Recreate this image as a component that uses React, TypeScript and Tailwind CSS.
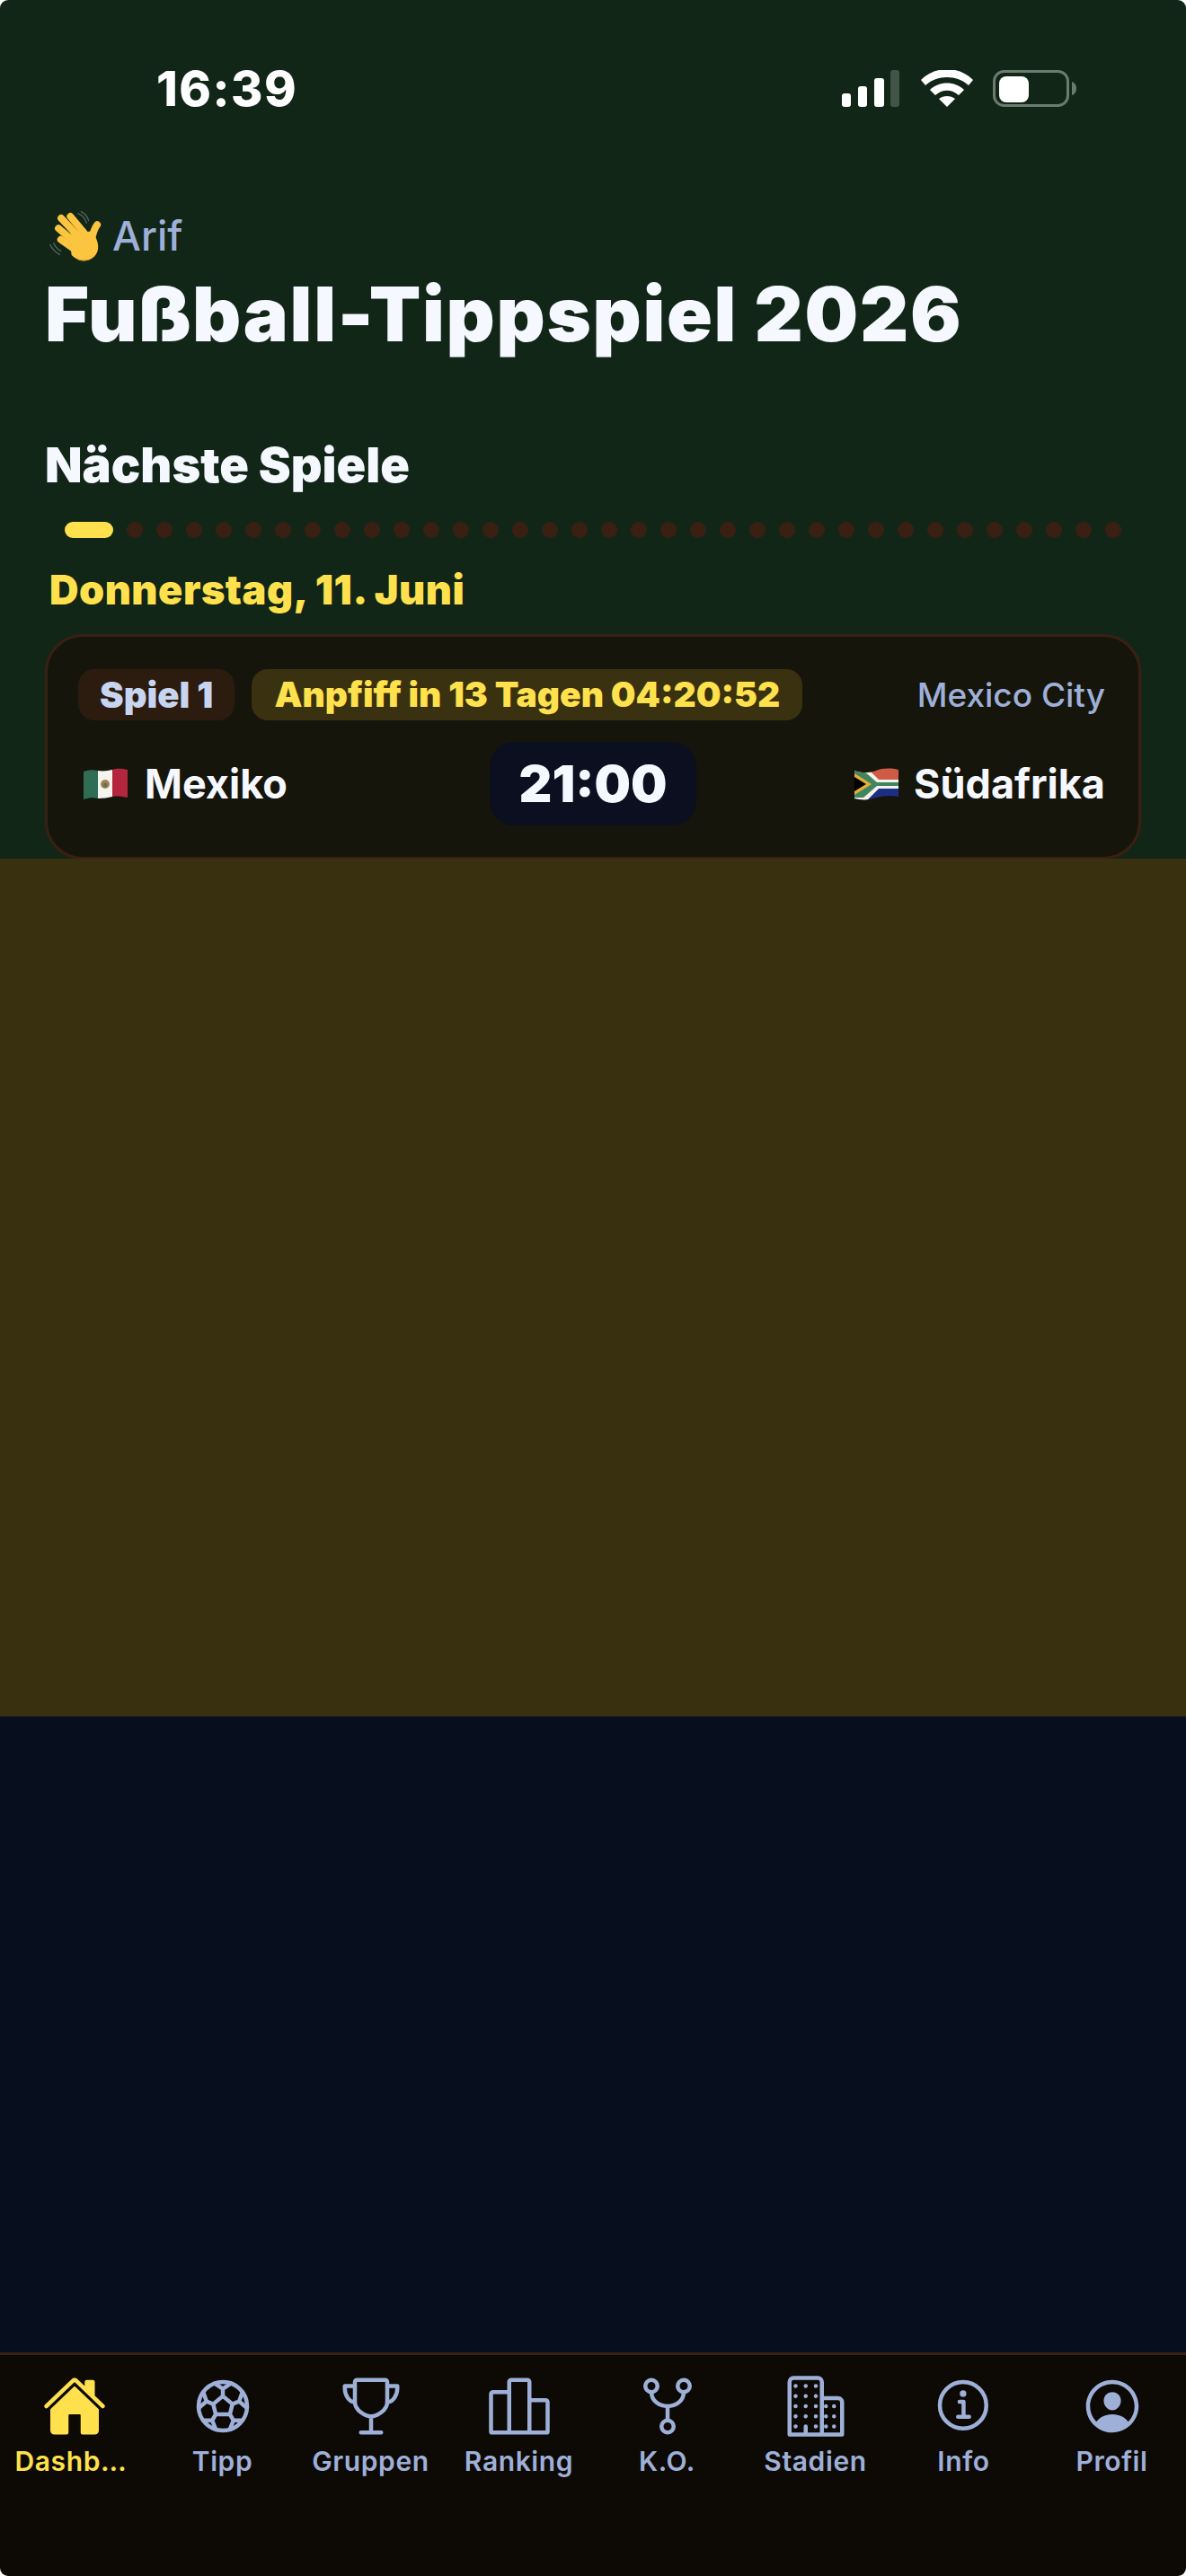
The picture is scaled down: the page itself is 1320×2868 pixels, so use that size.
import React from 'react'
import {
  IoHome,
  IoFootballOutline,
  IoTrophyOutline,
  IoPodiumOutline,
  IoGitNetworkOutline,
  IoBusinessOutline,
  IoInformationCircleOutline,
  IoPersonCircleOutline,
} from 'react-icons/io5'

const navItems = [
  { label: 'Dashboard', icon: IoHome, active: true },
  { label: 'Tipp', icon: IoFootballOutline },
  { label: 'Gruppen', icon: IoTrophyOutline },
  { label: 'Ranking', icon: IoPodiumOutline },
  { label: 'K.O.', icon: IoGitNetworkOutline },
  { label: 'Stadien', icon: IoBusinessOutline },
  { label: 'Info', icon: IoInformationCircleOutline },
  { label: 'Profil', icon: IoPersonCircleOutline },
]

const StatusIcons = () => (
  <svg width="262" height="42" viewBox="0 0 262 42" className="block">
    {/* signal */}
    <rect x="0" y="26" width="10" height="15" rx="3" fill="#fff" />
    <rect x="18" y="18" width="10" height="23" rx="3" fill="#fff" />
    <rect x="36" y="9" width="11" height="32" rx="3" fill="#fff" />
    <rect x="54" y="0" width="10" height="41" rx="3" fill="#415445" />
    {/* wifi */}
    <path d="M88 11 C104 -5 130 -5 146 11 L141 17 C128 5 106 5 93 17 Z" fill="#fff" />
    <path d="M98 22 C108 12 126 12 136 22 L130 28 C122 21 112 21 104 28 Z" fill="#fff" />
    <path d="M108 32 C113 28 121 28 126 32 L117 41 Z" fill="#fff" />
    {/* battery */}
    <rect x="169.5" y="1.5" width="82" height="38" rx="11" fill="none" stroke="#6b7c6e" strokeWidth="3" />
    <rect x="175" y="7" width="33" height="29" rx="8" fill="#fff" />
    <path d="M256 13 C259 14 261 17 261 20.500 C261 24 259 27 256 28 Z" fill="#6b7c6e" />
  </svg>
)

const WaveHand = () => (
  <svg width="60" height="63" viewBox="60 30 180 190" className="block shrink-0">
    <g fill="none" stroke="#5a645c" strokeWidth="4" strokeLinecap="round">
      <path d="M162 50 C176 56 186 68 190 82" />
      <path d="M172 44 C184 50 194 62 197 74" />
      <path d="M68 155 C74 168 86 180 100 188" />
      <path d="M80 150 C84 160 92 170 104 176" />
    </g>
    <g fill="none" stroke="#fbc53f" strokeWidth="24" strokeLinecap="round">
      <path d="M105 66 L170 135" />
      <path d="M136 60 L190 125" />
      <path d="M96 100 L155 150" />
      <path d="M104 138 L150 170" />
      <path d="M226 88 C216 100 212 115 208 135" />
    </g>
    <path d="M130 120 L205 110 C228 130 238 170 220 190 C200 215 160 212 140 190 Z" fill="#fbc53f" />
    <path d="M150 196 C170 212 205 212 222 186 C214 204 190 212 172 209 C164 208 156 203 150 196 Z" fill="#e8a52c" />
  </svg>
)

const MexicoFlag = () => (
  <svg width="49" height="36" viewBox="0 0 49 36" className="block shrink-0">
    <path d="M0 4 C6 2 11 2 16 3 L16 34 C11 33 6 33 0 35 Z" fill="#2f6d55" />
    <path d="M16 3 C22 4 27 3 32 2 L32 32 C27 33 22 34 16 34 Z" fill="#f6f4ef" />
    <path d="M32 2 C38 0 43 1 49 2 L49 33 C43 32 38 31 32 32 Z" fill="#b4263d" />
    <circle cx="24" cy="18" r="5" fill="#a5835a" />
    <circle cx="24" cy="19" r="2.500" fill="#5d7a4e" />
  </svg>
)

const SouthAfricaFlag = () => (
  <svg width="49" height="36" viewBox="0 0 49 36" className="block shrink-0">
    <defs>
      <clipPath id="flagza">
        <path d="M0 3 C8 6 16 6 24 3 C32 0 40 0 49 2 L49 32 C40 30 32 31 24 33 C16 36 8 36 0 34 Z" />
      </clipPath>
    </defs>
    <g clipPath="url(#flagza)">
      <rect width="49" height="18" fill="#cf5b47" />
      <rect y="18" width="49" height="18" fill="#1d2f85" />
      <path d="M0 0 L14 0 L27 13 L49 13 L49 23 L27 23 L14 36 L0 36 Z" fill="#f4f2ea" />
      <path d="M0 3 L10 3 L25 16 L49 16 L49 20 L25 20 L10 33 L0 33 Z" fill="#3f8560" />
      <path d="M0 6 L19 18 L0 30 Z" fill="#e9ae35" />
      <path d="M0 10 L13 18 L0 26 Z" fill="#000" />
    </g>
  </svg>
)

const App = () => {
  return (
    <div className="flex h-[2868px] w-[1320px] flex-col overflow-hidden rounded-[9px] font-['Inter',sans-serif] [font-optical-sizing:none]">
      {/* Header + next match */}
      <section className="flex h-[956px] flex-col overflow-hidden bg-[#122618] pl-[50px] pr-[50px]">
        <div className="flex items-center justify-between pt-[67px] pl-[124px] pr-[71px]">
          <span className="text-[54px] leading-[64px] font-extrabold tracking-[1.5px] text-white">16:39</span>
          <StatusIcons />
        </div>

        <div className="mt-[100px] flex items-center gap-[12px] pl-[3px]">
          <WaveHand />
          <span className="text-[45px] leading-[54px] font-medium text-[#9fb0d8]">Arif</span>
        </div>
        <h1 className="mt-[6px] text-[84px] leading-[100px] font-black tracking-[1.7px] text-[#f5f8ff]">
          Fußball-Tippspiel 2026
        </h1>

        <h2 className="mt-[86px] text-[54px] leading-[64px] font-black text-[#f5f8ff]">Nächste Spiele</h2>

        <div className="mt-[31px] flex items-center gap-[15px] pl-[22px]">
          <div className="h-[18px] w-[54px] rounded-full bg-[#ffe14d]" />
          {Array.from({ length: 34 }).map((_, i) => (
            <div key={i} className="h-[18px] w-[18px] rounded-full bg-[#3a2012]" />
          ))}
        </div>

        <div className="mt-[31px] pl-[5px] text-[45px] leading-[54px] font-black tracking-[0.5px] text-[#ffe14d]">
          Donnerstag, 11. Juni
        </div>

        <div className="mt-[22px] h-[251px] shrink-0 rounded-[42px] border-[3px] border-[#3a2012] bg-[#15150b] pl-[34px] pr-[37px] pt-[36px]">
          <div className="flex items-center">
            <span className="flex h-[57px] items-center rounded-[18px] bg-[#2c1c10] px-[24px] text-[40px] font-black text-[#c8d5f0]">
              Spiel 1
            </span>
            <span className="ml-[19px] flex h-[57px] items-center rounded-[18px] bg-[#3a3110] px-[25px] text-[39px] font-black text-[#ffe14d]">
              Anpfiff in 13 Tagen 04:20:52
            </span>
            <span className="ml-auto text-[37px] font-medium text-[#9fb0d8]">Mexico City</span>
          </div>
          <div className="ml-[3px] mt-[24px] grid grid-cols-[1fr_230px_1fr] items-center">
            <div className="flex items-center gap-[19px] pl-[3px]">
              <MexicoFlag />
              <span className="text-[45px] font-bold text-[#f5f8ff]">Mexiko</span>
            </div>
            <div className="flex h-[93px] items-center justify-center rounded-[27px] bg-[#0b0f20] text-[57px] font-black text-[#f5f8ff]">
              21:00
            </div>
            <div className="flex items-center justify-end gap-[17px]">
              <SouthAfricaFlag />
              <span className="text-[45px] font-bold text-[#f5f8ff]">Südafrika</span>
            </div>
          </div>
        </div>
      </section>

      {/* Empty sections */}
      <section className="h-[955px] bg-[#393010]" />
      <section className="flex-1 bg-[#070e1e]" />

      {/* Bottom nav */}
      <nav className="grid h-[249px] grid-cols-8 border-t-[3px] border-[#3a2012] bg-[#0d0a06] pt-[21px]">
        {navItems.map(item => {
          const Icon = item.icon
          return (
            <div
              key={item.label}
              className={`flex flex-col items-center ${item.active ? 'text-[#ffe14d]' : 'text-[#9fb0d8]'}`}
            >
              <Icon size={72} />
              <span className="mt-[5px] w-[132px] truncate text-center text-[30px] leading-[40px] font-semibold tracking-[0.6px]">
                {item.label}
              </span>
            </div>
          )
        })}
      </nav>
    </div>
  )
}

export default App
